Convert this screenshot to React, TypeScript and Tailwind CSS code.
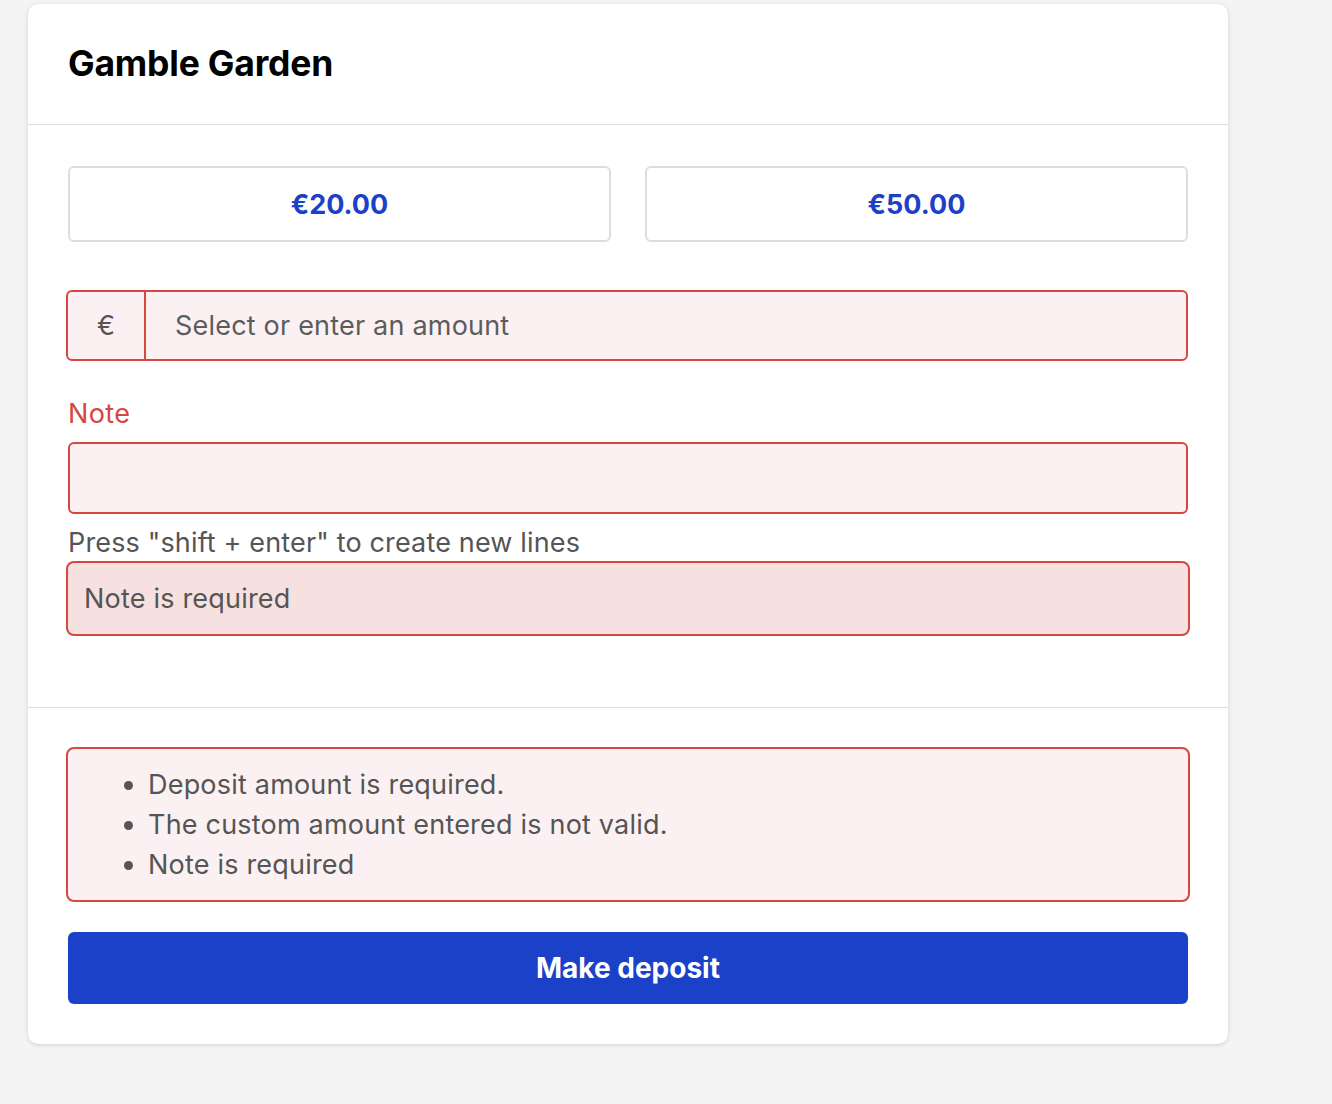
export default function App() {
  const errors = [
    "Deposit amount is required.",
    "The custom amount entered is not valid.",
    "Note is required",
  ]
  return (
    <div className="min-h-screen bg-[#f4f4f4] pt-[4px] pl-[28px]" style={{ fontFamily: "Inter, 'Noto Sans', sans-serif" }}>
      <div className="w-[1200px] bg-white rounded-[10px] shadow-[0_1px_4px_rgba(0,0,0,0.15)]">
        {/* Header */}
        <div className="h-[121px] px-[40px] flex items-center border-b border-[#dddddd]">
          <h1 className="text-[35.5px] font-bold text-black tracking-[-0.2px]">Gamble Garden</h1>
        </div>

        {/* Form */}
        <div className="px-[40px] pt-[41px] pb-[71px] border-b border-[#dddddd]">
          <div className="grid grid-cols-2 gap-[34px]">
            <button className="h-[76px] rounded-[6px] border-2 border-[#dddddd] text-[27px] font-bold text-[#1c41c8] pt-[2px]">€20.00</button>
            <button className="h-[76px] rounded-[6px] border-2 border-[#dddddd] text-[27px] font-bold text-[#1c41c8] pt-[2px]">€50.00</button>
          </div>

          <div className="mt-[48px] -ml-[2px] h-[71px] flex rounded-[6px] border-2 border-[#d5473f] bg-[#fbf1f2] overflow-hidden">
            <div className="w-[78px] flex items-center justify-center border-r-2 border-[#d5473f] pt-[2px] text-[27px] text-[#555555]">€</div>
            <div className="flex-1 flex items-center pl-[29px] pt-[2px] text-[27px] tracking-[0.2px] text-[#5c5c5c]">Select or enter an amount</div>
          </div>

          <div className="mt-[35px] text-[27px] tracking-[0.4px] text-[#d5473f] leading-[36px]">Note</div>
          <div className="mt-[10px] h-[72px] rounded-[6px] border-2 border-[#d5473f] bg-[#fbf1f2]"></div>
          <div className="mt-[12px] text-[27px] tracking-[0.15px] text-[#555555] leading-[34px]">Press "shift + enter" to create new lines</div>
          <div className="mt-[1px] -mx-[2px] h-[75px] rounded-[8px] border-2 border-[#d5473f] bg-[#f6e0e0] flex items-center px-[16px] pt-[1px] text-[27px] tracking-[0.2px] text-[#555555]">
            Note is required
          </div>
        </div>

        {/* Footer */}
        <div className="px-[40px] pt-[39px] pb-[40px]">
          <div className="-mx-[2px] h-[155px] rounded-[8px] border-2 border-[#d5473f] bg-[#fbf1f2] flex items-center">
            <ul className="list-disc pl-[80px] text-[27px] tracking-[0.2px] text-[#555555] leading-[40px]">
              {errors.map(e => (
                <li key={e}>{e}</li>
              ))}
            </ul>
          </div>
          <button className="mt-[30px] w-full h-[72px] rounded-[6px] bg-[#1b41c9] text-white text-[28px] font-bold">Make deposit</button>
        </div>
      </div>
    </div>
  )
}
